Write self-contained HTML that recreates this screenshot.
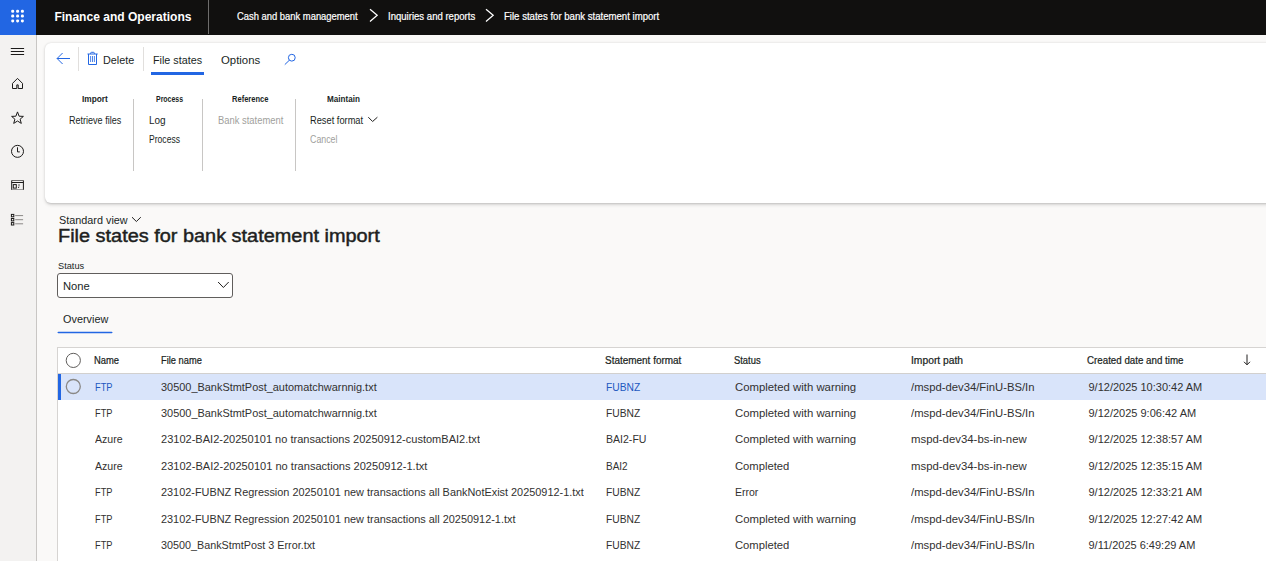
<!DOCTYPE html>
<html><head><meta charset="utf-8"><style>
html,body{margin:0;padding:0;width:1266px;height:561px;overflow:hidden;background:#faf9f8;font-family:"Liberation Sans", sans-serif}
.t{position:absolute;white-space:nowrap;line-height:1;font-family:"Liberation Sans", sans-serif}
.r{position:absolute;display:block}
</style></head><body>
<div class="r" style="left:0px;top:0px;width:1266px;height:35px;background:#11100f"></div>
<div class="r" style="left:0px;top:0px;width:36px;height:35px;background:#2266e3"></div>
<svg class="r" style="left:0px;top:0px;" width="36" height="34" viewBox="0 0 36 34"><rect x="11.2" y="9.7" width="3" height="3" rx="1.3" fill="#fff"/><rect x="11.2" y="14.600000000000001" width="3" height="3" rx="1.3" fill="#fff"/><rect x="11.2" y="19.4" width="3" height="3" rx="1.3" fill="#fff"/><rect x="16.1" y="9.7" width="3" height="3" rx="1.3" fill="#fff"/><rect x="16.1" y="14.600000000000001" width="3" height="3" rx="1.3" fill="#fff"/><rect x="16.1" y="19.4" width="3" height="3" rx="1.3" fill="#fff"/><rect x="20.9" y="9.7" width="3" height="3" rx="1.3" fill="#fff"/><rect x="20.9" y="14.600000000000001" width="3" height="3" rx="1.3" fill="#fff"/><rect x="20.9" y="19.4" width="3" height="3" rx="1.3" fill="#fff"/></svg>
<div class="t" style="left:54.40px;top:10.81px;font-size:12.04px;font-weight:700;color:#ffffff;">Finance and Operations</div>
<div class="r" style="left:208px;top:0px;width:1px;height:33.6px;background:#6e6d6c"></div>
<div class="t" style="left:237.10px;top:12.14px;font-size:10.0px;font-weight:400;color:#ffffff;transform:scaleX(0.9398);transform-origin:0 0;-webkit-text-stroke:0.2px #fff;">Cash and bank management</div>
<svg class="r" style="left:368px;top:8px;" width="12" height="16" viewBox="0 0 12 16"><path d="M2 1.2 L9.2 7.3 L2 13.4" fill="none" stroke="#fff" stroke-width="1.25"/></svg>
<div class="t" style="left:387.60px;top:12.14px;font-size:10.0px;font-weight:400;color:#ffffff;transform:scaleX(0.9565);transform-origin:0 0;-webkit-text-stroke:0.2px #fff;">Inquiries and reports</div>
<svg class="r" style="left:484.3px;top:8px;" width="12" height="16" viewBox="0 0 12 16"><path d="M2 1.2 L9.2 7.3 L2 13.4" fill="none" stroke="#fff" stroke-width="1.25"/></svg>
<div class="t" style="left:503.70px;top:12.14px;font-size:10.0px;font-weight:400;color:#ffffff;transform:scaleX(0.9595);transform-origin:0 0;-webkit-text-stroke:0.2px #fff;">File states for bank statement import</div>
<div class="r" style="left:0px;top:35px;width:36px;height:526px;background:#f3f2f1"></div>
<div class="r" style="left:36px;top:35px;width:1px;height:526px;background:#c8c6c4"></div>
<svg class="r" style="left:10px;top:46px;" width="16" height="10" viewBox="0 0 16 10"><path d="M0.8 2.5H14.1 M0.8 5.5H14.1 M0.8 8.5H14.1" stroke="#1b1a19" stroke-width="1"/></svg>
<svg class="r" style="left:10px;top:76px;" width="16" height="14" viewBox="0 0 16 14"><path d="M2.5 12.5 V7.4 L7.5 2.4 L12.5 7.4 V12.5 H8.2 V8.9 H6.8 V12.5 Z" fill="none" stroke="#1b1a19" stroke-width="1" stroke-linejoin="miter"/></svg>
<svg class="r" style="left:10px;top:110px;" width="16" height="15" viewBox="0 0 16 15"><path d="M7.5 1.9 L9.1 6.2 L13.4 6.4 L10.1 9.2 L11.3 13.4 L7.5 11.0 L3.7 13.4 L4.9 9.2 L1.6 6.4 L5.9 6.2 Z" fill="none" stroke="#1b1a19" stroke-width="1" stroke-linejoin="miter"/></svg>
<svg class="r" style="left:10px;top:144px;" width="16" height="15" viewBox="0 0 16 15"><circle cx="7.5" cy="7.35" r="6" fill="none" stroke="#1b1a19" stroke-width="1"/><path d="M7.5 3.3 V7.9 H9.8" fill="none" stroke="#1b1a19" stroke-width="1"/></svg>
<svg class="r" style="left:10px;top:178px;" width="16" height="14" viewBox="0 0 16 14"><path d="M1.7 2.5 H13.4" stroke="#6b6a69" stroke-width="1"/><path d="M1.7 12 V2.5 M13.4 12 V2.5 M1.7 4.5 H13.4" stroke="#1b1a19" stroke-width="1" fill="none"/><path d="M1.7 11.5 H13.4" stroke="#9a9998" stroke-width="1"/><rect x="3.3" y="6.6" width="3" height="3.5" fill="none" stroke="#1b1a19" stroke-width="1"/><path d="M9 6 V8.4" stroke="#555" stroke-width="1"/><circle cx="8.6" cy="9.3" r="0.6" fill="#1b1a19"/></svg>
<svg class="r" style="left:10px;top:212px;" width="16" height="14" viewBox="0 0 16 14"><rect x="1.4" y="2.4" width="2.4" height="2.4" fill="none" stroke="#1b1a19" stroke-width="1"/><rect x="1.4" y="6.5" width="2.4" height="2.4" fill="none" stroke="#1b1a19" stroke-width="1"/><rect x="1.4" y="10.6" width="2.4" height="2.4" fill="none" stroke="#1b1a19" stroke-width="1"/><path d="M5.2 3.6H13.1 M5.2 7.7H13.1 M5.2 11.8H13.1" stroke="#8a8886" stroke-width="1"/></svg>
<div class="r" style="left:45px;top:43px;width:1240px;height:160px;background:#fff;border-radius:6px;box-shadow:0 0.6px 1.8px rgba(0,0,0,0.11),0 1.6px 3.6px rgba(0,0,0,0.13)"></div>
<svg class="r" style="left:54px;top:50px;" width="18" height="16" viewBox="0 0 18 16"><path d="M3.1 8.5 H16 M8.6 3 L3.1 8.5 L8.6 14" fill="none" stroke="#2266e3" stroke-width="1"/></svg>
<div class="r" style="left:78px;top:47px;width:1px;height:24px;background:#e1dfdd"></div>
<svg class="r" style="left:86px;top:51px;" width="13" height="15" viewBox="0 0 13 15"><path d="M1.5 3 H11.7 M2.5 3 V13.5 H10.5 V3" fill="none" stroke="#2266e3" stroke-width="1"/><path d="M4.6 3 V2.3 Q4.6 1.3 5.6 1.3 H7.4 Q8.4 1.3 8.4 2.3 V3" fill="none" stroke="#2266e3" stroke-width="1"/><path d="M4.6 5 V11 M6.5 5 V11 M8.4 5 V11" stroke="#2266e3" stroke-width="0.8"/></svg>
<div class="t" style="left:102.80px;top:54.77px;font-size:10.9px;font-weight:400;color:#201f1e;transform:scaleX(0.9929);transform-origin:0 0;">Delete</div>
<div class="r" style="left:143px;top:47px;width:1px;height:24px;background:#e1dfdd"></div>
<div class="t" style="left:152.80px;top:54.77px;font-size:10.9px;font-weight:400;color:#201f1e;transform:scaleX(0.9883);transform-origin:0 0;">File states</div>
<div class="r" style="left:151px;top:72px;width:53px;height:3px;background:#2266e3"></div>
<div class="t" style="left:220.60px;top:54.77px;font-size:10.9px;font-weight:400;color:#201f1e;transform:scaleX(1.0450);transform-origin:0 0;">Options</div>
<svg class="r" style="left:282px;top:52px;" width="16" height="15" viewBox="0 0 16 15"><circle cx="9.8" cy="5.7" r="3.4" fill="none" stroke="#2266e3" stroke-width="1"/><path d="M7.4 8.2 L2.8 12.6" stroke="#2266e3" stroke-width="1"/></svg>
<div class="t" style="left:81.50px;top:95.82px;font-size:8.25px;font-weight:700;color:#201f1e;transform:scaleX(1.0071);transform-origin:0 0;">Import</div>
<div class="t" style="left:155.60px;top:95.82px;font-size:8.25px;font-weight:700;color:#201f1e;transform:scaleX(0.8426);transform-origin:0 0;">Process</div>
<div class="t" style="left:231.80px;top:95.82px;font-size:8.25px;font-weight:700;color:#201f1e;transform:scaleX(0.9130);transform-origin:0 0;">Reference</div>
<div class="t" style="left:327.20px;top:95.82px;font-size:8.25px;font-weight:700;color:#201f1e;transform:scaleX(0.9815);transform-origin:0 0;">Maintain</div>
<div class="t" style="left:68.60px;top:115.73px;font-size:10.0px;font-weight:400;color:#201f1e;transform:scaleX(0.9031);transform-origin:0 0;">Retrieve files</div>
<div class="t" style="left:148.90px;top:115.73px;font-size:10.0px;font-weight:400;color:#201f1e;">Log</div>
<div class="t" style="left:148.90px;top:134.94px;font-size:10.0px;font-weight:400;color:#201f1e;transform:scaleX(0.8582);transform-origin:0 0;">Process</div>
<div class="t" style="left:217.60px;top:115.73px;font-size:10.0px;font-weight:400;color:#a19f9d;transform:scaleX(0.9397);transform-origin:0 0;">Bank statement</div>
<div class="t" style="left:310.30px;top:115.73px;font-size:10.0px;font-weight:400;color:#201f1e;transform:scaleX(0.9276);transform-origin:0 0;">Reset format</div>
<svg class="r" style="left:366px;top:114px;" width="13" height="10" viewBox="0 0 13 10"><path d="M2.3 3.2 L6.6 7.5 L11.4 3.2" fill="none" stroke="#201f1e" stroke-width="1"/></svg>
<div class="t" style="left:310.30px;top:134.94px;font-size:10.0px;font-weight:400;color:#a19f9d;transform:scaleX(0.8833);transform-origin:0 0;">Cancel</div>
<div class="r" style="left:133px;top:99px;width:1px;height:72px;background:#c8c6c4"></div>
<div class="r" style="left:202px;top:99px;width:1px;height:72px;background:#c8c6c4"></div>
<div class="r" style="left:295px;top:99px;width:1px;height:72px;background:#c8c6c4"></div>
<div class="t" style="left:58.70px;top:214.89px;font-size:11px;font-weight:400;color:#201f1e;transform:scaleX(0.9848);transform-origin:0 0;">Standard view</div>
<svg class="r" style="left:129px;top:213px;" width="14" height="10" viewBox="0 0 14 10"><path d="M3 4.2 L7.4 8.5 L11.8 4.2" fill="none" stroke="#201f1e" stroke-width="1"/></svg>
<div class="t" style="left:58.11px;top:226.51px;font-size:18.3px;font-weight:400;color:#201f1e;transform:scaleX(1.0883);transform-origin:0 0;-webkit-text-stroke:0.45px #201f1e;">File states for bank statement import</div>
<div class="t" style="left:57.80px;top:260.82px;font-size:9.9px;font-weight:400;color:#201f1e;transform:scaleX(0.9338);transform-origin:0 0;">Status</div>
<div class="r" style="left:57px;top:273px;width:176px;height:25px;box-sizing:border-box;background:#fff;border:1px solid #605e5c;border-radius:3px"></div>
<div class="t" style="left:62.60px;top:280.53px;font-size:11.3px;font-weight:400;color:#201f1e;transform:scaleX(0.9916);transform-origin:0 0;">None</div>
<svg class="r" style="left:214px;top:279px;" width="16" height="12" viewBox="0 0 16 12"><path d="M4.1 3 L9.4 8.5 L14.7 3" fill="none" stroke="#201f1e" stroke-width="1"/></svg>
<div class="t" style="left:62.50px;top:313.77px;font-size:10.9px;font-weight:400;color:#201f1e;transform:scaleX(0.9973);transform-origin:0 0;">Overview</div>
<svg class="r" style="left:57px;top:331px;" width="56" height="3" viewBox="0 0 56 3"><rect x="0.5" y="0.7" width="55" height="1.6" rx="0.8" fill="#2266e3"/></svg>
<div class="r" style="left:57px;top:347px;width:1300px;height:230px;box-sizing:border-box;background:#fff;border:1px solid #d6d4d2"></div>
<div class="r" style="left:58px;top:373px;width:1300px;height:1px;background:#d2d0ce"></div>
<div class="r" style="left:58px;top:374px;width:1300px;height:25.6px;background:#d9e4fa"></div>
<div class="r" style="left:58px;top:374px;width:3px;height:25.6px;background:#2266e3"></div>
<svg class="r" style="left:65px;top:352px;" width="17" height="17" viewBox="0 0 17 17"><circle cx="8.3" cy="8.4" r="7.1" fill="none" stroke="#605e5c" stroke-width="1"/></svg>
<svg class="r" style="left:65px;top:378px;" width="17" height="17" viewBox="0 0 17 17"><circle cx="8.3" cy="8.5" r="7" fill="none" stroke="#8a8886" stroke-width="1.3"/></svg>
<div class="t" style="left:93.90px;top:356.34px;font-size:10.0px;font-weight:400;color:#201f1e;transform:scaleX(0.9405);transform-origin:0 0;-webkit-text-stroke:0.22px #201f1e;">Name</div>
<div class="t" style="left:160.90px;top:356.34px;font-size:10.0px;font-weight:400;color:#201f1e;transform:scaleX(0.9291);transform-origin:0 0;-webkit-text-stroke:0.22px #201f1e;">File name</div>
<div class="t" style="left:604.70px;top:356.34px;font-size:10.0px;font-weight:400;color:#201f1e;transform:scaleX(0.9958);transform-origin:0 0;-webkit-text-stroke:0.22px #201f1e;">Statement format</div>
<div class="t" style="left:733.80px;top:356.34px;font-size:10.0px;font-weight:400;color:#201f1e;transform:scaleX(0.9383);transform-origin:0 0;-webkit-text-stroke:0.22px #201f1e;">Status</div>
<div class="t" style="left:910.70px;top:356.34px;font-size:10.0px;font-weight:400;color:#201f1e;transform:scaleX(1.0296);transform-origin:0 0;-webkit-text-stroke:0.22px #201f1e;">Import path</div>
<div class="t" style="left:1087.30px;top:356.34px;font-size:10.0px;font-weight:400;color:#201f1e;transform:scaleX(0.9750);transform-origin:0 0;-webkit-text-stroke:0.22px #201f1e;">Created date and time</div>
<svg class="r" style="left:1242px;top:352px;" width="10" height="15" viewBox="0 0 10 15"><path d="M5 2.5 V12.8 M2 9.8 L5 12.8 L8 9.8" fill="none" stroke="#201f1e" stroke-width="1"/></svg>
<div class="t" style="left:94.90px;top:381.59px;font-size:11.0px;font-weight:400;color:#2258c0;transform:scaleX(0.8416);transform-origin:0 0;">FTP</div>
<div class="t" style="left:161.20px;top:381.59px;font-size:11.0px;font-weight:400;color:#323130;transform:scaleX(0.9935);transform-origin:0 0;">30500_BankStmtPost_automatchwarnnig.txt</div>
<div class="t" style="left:605.60px;top:381.59px;font-size:11.0px;font-weight:400;color:#2258c0;transform:scaleX(0.9338);transform-origin:0 0;">FUBNZ</div>
<div class="t" style="left:734.60px;top:381.59px;font-size:11.0px;font-weight:400;color:#323130;transform:scaleX(1.0318);transform-origin:0 0;">Completed with warning</div>
<div class="t" style="left:911.20px;top:381.59px;font-size:11.0px;font-weight:400;color:#323130;transform:scaleX(1.0256);transform-origin:0 0;">/mspd-dev34/FinU-BS/In</div>
<div class="t" style="left:1088.50px;top:381.59px;font-size:11.0px;font-weight:400;color:#323130;">9/12/2025 10:30:42 AM</div>
<div class="t" style="left:94.90px;top:407.59px;font-size:11.0px;font-weight:400;color:#323130;transform:scaleX(0.8416);transform-origin:0 0;">FTP</div>
<div class="t" style="left:161.20px;top:407.59px;font-size:11.0px;font-weight:400;color:#323130;transform:scaleX(0.9935);transform-origin:0 0;">30500_BankStmtPost_automatchwarnnig.txt</div>
<div class="t" style="left:605.60px;top:407.59px;font-size:11.0px;font-weight:400;color:#323130;transform:scaleX(0.9338);transform-origin:0 0;">FUBNZ</div>
<div class="t" style="left:734.60px;top:407.59px;font-size:11.0px;font-weight:400;color:#323130;transform:scaleX(1.0318);transform-origin:0 0;">Completed with warning</div>
<div class="t" style="left:911.20px;top:407.59px;font-size:11.0px;font-weight:400;color:#323130;transform:scaleX(1.0256);transform-origin:0 0;">/mspd-dev34/FinU-BS/In</div>
<div class="t" style="left:1088.50px;top:407.59px;font-size:11.0px;font-weight:400;color:#323130;">9/12/2025 9:06:42 AM</div>
<div class="t" style="left:94.90px;top:433.79px;font-size:11.0px;font-weight:400;color:#323130;transform:scaleX(0.9609);transform-origin:0 0;">Azure</div>
<div class="t" style="left:161.20px;top:433.79px;font-size:11.0px;font-weight:400;color:#323130;transform:scaleX(1.0030);transform-origin:0 0;">23102-BAI2-20250101 no transactions 20250912-customBAI2.txt</div>
<div class="t" style="left:605.60px;top:433.79px;font-size:11.0px;font-weight:400;color:#323130;transform:scaleX(0.9590);transform-origin:0 0;">BAI2-FU</div>
<div class="t" style="left:734.60px;top:433.79px;font-size:11.0px;font-weight:400;color:#323130;transform:scaleX(1.0318);transform-origin:0 0;">Completed with warning</div>
<div class="t" style="left:911.20px;top:433.79px;font-size:11.0px;font-weight:400;color:#323130;transform:scaleX(1.0345);transform-origin:0 0;">mspd-dev34-bs-in-new</div>
<div class="t" style="left:1088.50px;top:433.79px;font-size:11.0px;font-weight:400;color:#323130;">9/12/2025 12:38:57 AM</div>
<div class="t" style="left:94.90px;top:460.89px;font-size:11.0px;font-weight:400;color:#323130;transform:scaleX(0.9609);transform-origin:0 0;">Azure</div>
<div class="t" style="left:161.20px;top:460.89px;font-size:11.0px;font-weight:400;color:#323130;transform:scaleX(1.0059);transform-origin:0 0;">23102-BAI2-20250101 no transactions 20250912-1.txt</div>
<div class="t" style="left:605.60px;top:460.89px;font-size:11.0px;font-weight:400;color:#323130;transform:scaleX(0.9060);transform-origin:0 0;">BAI2</div>
<div class="t" style="left:734.60px;top:460.89px;font-size:11.0px;font-weight:400;color:#323130;transform:scaleX(1.0211);transform-origin:0 0;">Completed</div>
<div class="t" style="left:911.20px;top:460.89px;font-size:11.0px;font-weight:400;color:#323130;transform:scaleX(1.0345);transform-origin:0 0;">mspd-dev34-bs-in-new</div>
<div class="t" style="left:1088.50px;top:460.89px;font-size:11.0px;font-weight:400;color:#323130;">9/12/2025 12:35:15 AM</div>
<div class="t" style="left:94.90px;top:486.59px;font-size:11.0px;font-weight:400;color:#323130;transform:scaleX(0.8416);transform-origin:0 0;">FTP</div>
<div class="t" style="left:161.20px;top:486.59px;font-size:11.0px;font-weight:400;color:#323130;transform:scaleX(0.9905);transform-origin:0 0;">23102-FUBNZ Regression 20250101 new transactions all BankNotExist 20250912-1.txt</div>
<div class="t" style="left:605.60px;top:486.59px;font-size:11.0px;font-weight:400;color:#323130;transform:scaleX(0.9338);transform-origin:0 0;">FUBNZ</div>
<div class="t" style="left:734.60px;top:486.59px;font-size:11.0px;font-weight:400;color:#323130;transform:scaleX(0.9564);transform-origin:0 0;">Error</div>
<div class="t" style="left:911.20px;top:486.59px;font-size:11.0px;font-weight:400;color:#323130;transform:scaleX(1.0256);transform-origin:0 0;">/mspd-dev34/FinU-BS/In</div>
<div class="t" style="left:1088.50px;top:486.59px;font-size:11.0px;font-weight:400;color:#323130;">9/12/2025 12:33:21 AM</div>
<div class="t" style="left:94.90px;top:513.59px;font-size:11.0px;font-weight:400;color:#323130;transform:scaleX(0.8416);transform-origin:0 0;">FTP</div>
<div class="t" style="left:161.20px;top:513.59px;font-size:11.0px;font-weight:400;color:#323130;transform:scaleX(0.9909);transform-origin:0 0;">23102-FUBNZ Regression 20250101 new transactions all 20250912-1.txt</div>
<div class="t" style="left:605.60px;top:513.59px;font-size:11.0px;font-weight:400;color:#323130;transform:scaleX(0.9338);transform-origin:0 0;">FUBNZ</div>
<div class="t" style="left:734.60px;top:513.59px;font-size:11.0px;font-weight:400;color:#323130;transform:scaleX(1.0318);transform-origin:0 0;">Completed with warning</div>
<div class="t" style="left:911.20px;top:513.59px;font-size:11.0px;font-weight:400;color:#323130;transform:scaleX(1.0256);transform-origin:0 0;">/mspd-dev34/FinU-BS/In</div>
<div class="t" style="left:1088.50px;top:513.59px;font-size:11.0px;font-weight:400;color:#323130;">9/12/2025 12:27:42 AM</div>
<div class="t" style="left:94.90px;top:539.69px;font-size:11.0px;font-weight:400;color:#323130;transform:scaleX(0.8416);transform-origin:0 0;">FTP</div>
<div class="t" style="left:161.20px;top:539.69px;font-size:11.0px;font-weight:400;color:#323130;transform:scaleX(0.9804);transform-origin:0 0;">30500_BankStmtPost 3 Error.txt</div>
<div class="t" style="left:605.60px;top:539.69px;font-size:11.0px;font-weight:400;color:#323130;transform:scaleX(0.9338);transform-origin:0 0;">FUBNZ</div>
<div class="t" style="left:734.60px;top:539.69px;font-size:11.0px;font-weight:400;color:#323130;transform:scaleX(1.0211);transform-origin:0 0;">Completed</div>
<div class="t" style="left:911.20px;top:539.69px;font-size:11.0px;font-weight:400;color:#323130;transform:scaleX(1.0256);transform-origin:0 0;">/mspd-dev34/FinU-BS/In</div>
<div class="t" style="left:1088.50px;top:539.69px;font-size:11.0px;font-weight:400;color:#323130;">9/11/2025 6:49:29 AM</div>
</body></html>
